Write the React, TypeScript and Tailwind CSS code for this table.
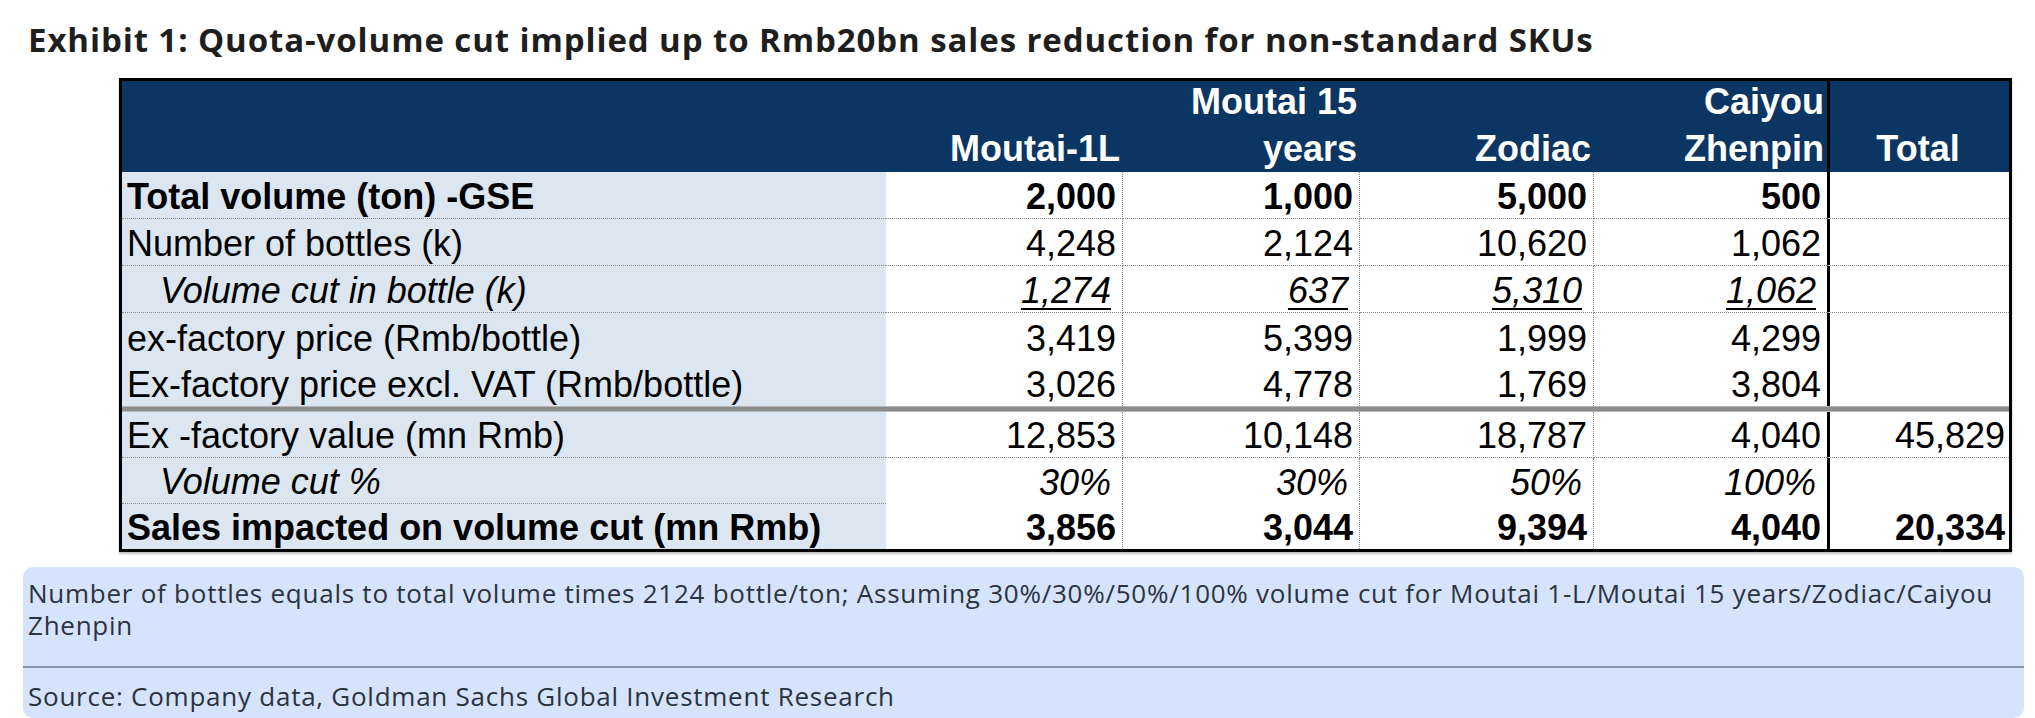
import React from "react";

type Row = {
  label: string;
  vals: string[];
  kind?: "bold" | "italic" | "italicU";
  line: "dotted" | "none" | "label";
};

const rows: Row[] = [
  { label: "Total volume (ton) -GSE", vals: ["2,000", "1,000", "5,000", "500", ""], kind: "bold", line: "dotted" },
  { label: "Number of bottles (k)", vals: ["4,248", "2,124", "10,620", "1,062", ""], line: "dotted" },
  { label: "Volume cut in bottle (k)", vals: ["1,274", "637", "5,310", "1,062", ""], kind: "italicU", line: "dotted" },
  { label: "ex-factory price (Rmb/bottle)", vals: ["3,419", "5,399", "1,999", "4,299", ""], line: "none" },
  { label: "Ex-factory price excl. VAT (Rmb/bottle)", vals: ["3,026", "4,778", "1,769", "3,804", ""], line: "none" },
  { label: "Ex -factory value (mn Rmb)", vals: ["12,853", "10,148", "18,787", "4,040", "45,829"], line: "dotted" },
  { label: "Volume cut %", vals: ["30%", "30%", "50%", "100%", ""], kind: "italic", line: "label" },
  { label: "Sales impacted on volume cut (mn Rmb)", vals: ["3,856", "3,044", "9,394", "4,040", "20,334"], kind: "bold", line: "none" },
];

function BodyRow({ row, h }: { row: Row; h: string }) {
  const weight = row.kind === "bold" ? "font-bold" : "";
  const italic = row.kind === "italic" || row.kind === "italicU" ? "italic" : "";
  const dotted = row.line === "dotted" ? "border-b border-dotted border-[#8a8a8a]" : "";
  const labelLine = row.line === "dotted" || row.line === "label" ? "border-b border-dotted border-[#8a8a8a]" : "";
  return (
    <>
      <div
        className={`${h} ${labelLine} ${weight} ${italic} bg-[#dce6f1] flex items-end pb-[3px] ${
          italic ? "pl-[38px]" : "pl-[5px]"
        } whitespace-nowrap`}
      >
        {row.label}
      </div>
      {row.vals.map((v, i) => {
        const isTotal = i === 4;
        const vline = i < 3 ? "border-r border-dotted border-[#8a8a8a]" : "";
        return (
          <div
            key={i}
            className={`${h} ${dotted} ${vline} ${weight} ${italic} flex items-end justify-end pb-[3px] ${
              isTotal ? "shadow-[inset_3px_0_0_#000] pr-[4px]" : italic ? "pr-[11px]" : "pr-[6px]"
            }`}
          >
            {row.kind === "italicU" && v ? (
              <span className="underline decoration-2 underline-offset-[5px]">{v}</span>
            ) : (
              v
            )}
          </div>
        );
      })}
    </>
  );
}

export default function App() {
  return (
    <div className="w-[2035px] h-[718px] bg-white overflow-hidden">
      <h1 className="pl-[28px] pt-[22px] leading-[36px] text-[33px] font-bold text-[#1e1e1e] font-['Open_Sans',sans-serif] tracking-[0.9px] whitespace-nowrap">
        Exhibit 1: Quota-volume cut implied up to Rmb20bn sales reduction for non-standard SKUs
      </h1>

      <div className="pl-[119px] mt-[20px]">
        <div className="w-fit border-[3px] border-black shadow-[0_2px_2px_rgba(0,0,0,0.25)] grid grid-cols-[764px_237px_237px_234px_233px_182px] text-[36px] leading-none text-black font-['Liberation_Sans',Arial,sans-serif]">
          {/* header */}
          <div className="h-[91px] bg-[#0b3562]" />
          <div className="h-[91px] bg-[#0b3562] text-white font-bold flex items-end justify-end pr-[3px] pb-[5px]">Moutai-1L</div>
          <div className="h-[91px] bg-[#0b3562] text-white font-bold flex flex-col items-end justify-end pr-[3px] pb-[5px] gap-[11px]">
            <span>Moutai 15</span>
            <span>years</span>
          </div>
          <div className="h-[91px] bg-[#0b3562] text-white font-bold flex items-end justify-end pr-[3px] pb-[5px]">Zodiac</div>
          <div className="h-[91px] bg-[#0b3562] text-white font-bold flex flex-col items-end justify-end pr-[3px] pb-[5px] gap-[11px]">
            <span>Caiyou</span>
            <span>Zhenpin</span>
          </div>
          <div className="h-[91px] bg-[#0b3562] shadow-[inset_3px_0_0_#000] text-white font-bold flex items-end justify-center pb-[5px]">Total</div>

          {rows.slice(0, 5).map((r, i) => (
            <BodyRow key={i} row={r} h={i === 4 ? "h-[46px]" : "h-[47px]"} />
          ))}
          <div className="col-span-6 h-[6px] bg-[#8c8c8c] border-y border-[#b5b5b5]" />
          {rows.slice(5).map((r, i) => (
            <BodyRow key={i} row={r} h={i === 2 ? "h-[45px]" : "h-[46px]"} />
          ))}
        </div>
      </div>

      <div className="ml-[23px] w-[2001px] mt-[15px] rounded-[10px] bg-[#d6e3fc] text-[#2b3340] font-['Open_Sans',sans-serif] text-[26px] tracking-[0.75px]">
        <div className="px-[5px] pt-[10px] pb-[25px] leading-[32px]">
          <p>Number of bottles equals to total volume times 2124 bottle/ton; Assuming 30%/30%/50%/100% volume cut for Moutai 1-L/Moutai 15 years/Zodiac/Caiyou</p>
          <p>Zhenpin</p>
        </div>
        <div className="h-[2px] bg-[#8b95a8]" />
        <p className="px-[5px] pt-[12px] pb-[6px] leading-[32px]">Source: Company data, Goldman Sachs Global Investment Research</p>
      </div>
    </div>
  );
}
